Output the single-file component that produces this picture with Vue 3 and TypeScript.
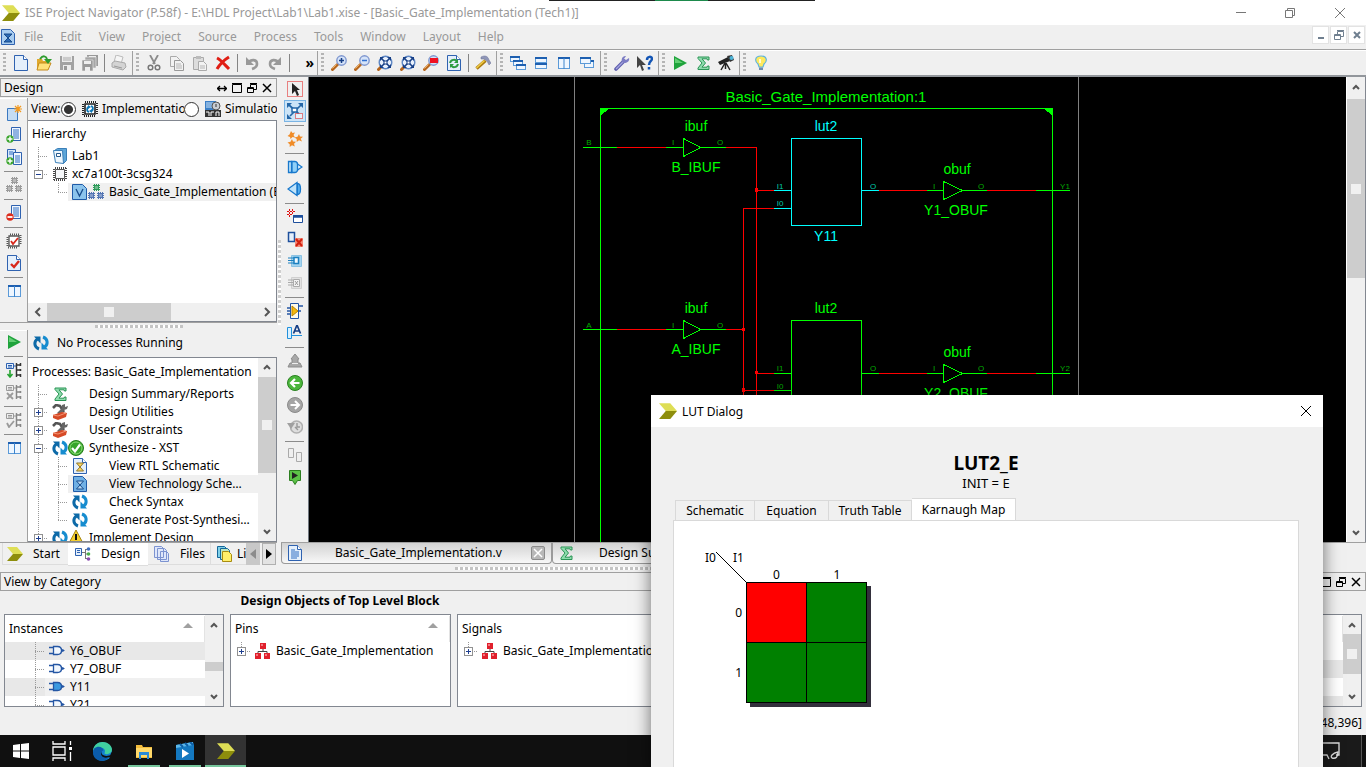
<script setup lang="ts">
import { h, ref, type FunctionalComponent } from 'vue'

const page = '<path d="M1.5 .5h9l4 4v11h-13z" fill="#e4effb" stroke="#2f62b0"/><path d="M10.5 .5v4h4" fill="#fff" stroke="#2f62b0"/>'
const pageLines = page + '<path d="M4 5h4M4 7h8M4 9h8M4 11h8M4 13h6" stroke="#2f6fc4"/>'
const magnifier = '<path d="M1.500 14.500l5-5" stroke="#b5651d" stroke-width="3" stroke-linecap="round"/><path d="M1.500 13.500l4-4" stroke="#f0b060"/><circle cx="10.500" cy="5.500" r="4.700" fill="#d5e3f8" stroke="#7f97cf" stroke-width="1.400"/>'
const fit = '<path d="M1.500 14.500l4-4" stroke="#b5651d" stroke-width="3" stroke-linecap="round"/><circle cx="8.500" cy="7.500" r="6.300" fill="#eaf2fd" stroke="#5d86c4" stroke-width="1.400"/><path d="M4 3l9 9M13 3l-9 9" stroke="#173f86" stroke-width="1.500"/><path d="M3 2h4l-4 4zM14 2h-4l4 4zM3 13h4l-4-4zM14 13h-4l4-4z" fill="#173f86"/><rect x="7" y="6" width="3" height="3" fill="#fff" stroke="#173f86"/>'
const chipRight = '<path d="M10 1h3v14h-3z" fill="#fff"/><path d="M10.500 1v14M10.500 3h4M10.500 8h4M10.500 13h4M14.500 1v3M14.500 7v2M14.500 12v3" fill="none" stroke="#333" stroke-width="1.500"/>'
const win = (x: number, y: number, w: number, ht: number) =>
  `<rect x="${x + 0.5}" y="${y + 0.5}" width="${w - 1}" height="${ht - 1}" fill="#eef6ff" stroke="#5b9ad8"/><path d="M${x} ${y + 1}h${w}" stroke="#1d5fb0" stroke-width="2"/>`
const block = (x: number, y: number, c: string) =>
  `<rect x="${x + 1}" y="${y + 1}" width="5" height="5" fill="${c}"/><path d="M${x} ${y + 1.5}h7M${x} ${y + 3.5}h7M${x} ${y + 5.5}h7M${x + 1.5} ${y}v7M${x + 3.5} ${y}v7M${x + 5.5} ${y}v7" stroke="${c}" stroke-width="1"/><rect x="${x + 2}" y="${y + 2}" width="3" height="3" fill="#fff" fill-opacity=".3"/>`
const gate = (f: string) =>
  `<path d="M0 4.500h5M0 10.500h5M11 7.500h4" stroke="#2456a4" stroke-width="1.600"/><path d="M4.500 3.500h4c3 0 4 2 4 4s-1 4-4 4h-4z" fill="${f}" stroke="#2456a4" stroke-width="1.300"/><path d="M12 5.500l4 2-4 2z" fill="#2456a4"/>`

const icons: Record<string, string> = {
  logo: '<path d="M0 1h10l6 7H6z" fill="#dede55"/><path d="M6 8h10l-6 7H0z" fill="#8e8e0c"/>',
  schem: '<path d="M1.500 .5h9l4 4v11h-13z" fill="#a9cdf0" stroke="#2f62b0"/><path d="M4 5h8l-4 4zM4 13h8l-4-4z" fill="#2d6bb5" stroke="#174b8c"/>',
  schemY: page + '<path d="M4.500 5h7l-3.500 4zM4.500 13h7l-3.500-4z" fill="#ffd85c" stroke="#8b7430"/>',
  schemS: '<path d="M1.500 .5h9l4 4v11h-13z" fill="#70b0e4" stroke="#1f5ba8"/><path d="M4.500 5h7l-3.500 4zM4.500 13h7l-3.500-4z" fill="#b9daf4" stroke="#174b8c"/>',
  page, pageLines,
  open: '<path d="M1 4h5l1 2h6v8H1z" fill="#e0a92c"/><path d="M3 8h12l-3 7H1z" fill="#ffe27a" stroke="#c58a1c"/><path d="M4 4c3-4 6-3 7 0" fill="none" stroke="#2e9c2e" stroke-width="2"/><path d="M8 4h8l-4 5z" fill="#2e9c2e"/>',
  save: '<path d="M1 1h14v14H1z" fill="#a2a2a2"/><path d="M3 1h10v6H3zM4 10h8v5H4z" fill="#ececec"/><path d="M4 3h8M4 5h8" stroke="#aaa"/><path d="M5 11h3v4H5z" fill="#999"/>',
  saveall: '<path d="M5 0h11v11H5z" fill="#999"/><path d="M7 1h7v3H7z" fill="#eee"/><path d="M3 2h11v11H3z" fill="#a6a6a6" stroke="#eee" stroke-width=".6"/><path d="M0 5h11v11H0z" fill="#999" stroke="#eee" stroke-width=".6"/><path d="M2 6h7v3H2zM3 12h5v4H3z" fill="#eee"/>',
  print: '<path d="M5 0l7 2-2 7-7-2z" fill="#f6f6f6" stroke="#bbb"/><path d="M1 8l3-2 10 2 1 4-3 3-11-3z" fill="#d4d4d4" stroke="#aaa"/><path d="M3 11l8 2" stroke="#999"/>',
  cut: '<path d="M4 0l5 9M12 0L7 9" stroke="#8b8b8b" stroke-width="1.800"/><circle cx="4.500" cy="12.500" r="2.300" fill="none" stroke="#777" stroke-width="1.500"/><circle cx="11.500" cy="12.500" r="2.300" fill="none" stroke="#777" stroke-width="1.500"/>',
  copy: '<path d="M1.500 1.500h6l3 3v7h-9z" fill="#f2f2f2" stroke="#aaa"/><path d="M5.500 5.500h6l3 3v7h-9z" fill="#f2f2f2" stroke="#999"/><path d="M7 9h5M7 11h6M7 13h6" stroke="#b5b5b5"/>',
  paste: '<path d="M1.500 2.500h10v12h-10z" fill="#ddd" stroke="#aaa"/><path d="M4 1h5v3H4z" fill="#bbb"/><path d="M6.500 6.500h5l3 3v6h-8z" fill="#f2f2f2" stroke="#aaa"/><path d="M8 11h5M8 13h5" stroke="#b5b5b5"/>',
  del: '<path d="M2 3c4 2 8 7 12 11M14 2C9 5 5 9 2 14" fill="none" stroke="#e01e14" stroke-width="3"/>',
  undo: '<path d="M4 8c3-4 9-4 9 1 0 3-2 4-5 5" fill="none" stroke="#999" stroke-width="2.600"/><path d="M2 2v8h8z" fill="#999"/>',
  redo: '<path d="M12 8c-3-4-9-4-9 1 0 3 2 4 5 5" fill="none" stroke="#999" stroke-width="2.600"/><path d="M14 2v8H6z" fill="#999"/>',
  zin: magnifier + '<path d="M8 5.500h5M10.500 3v5" stroke="#173f86" stroke-width="1.500"/>',
  zout: magnifier + '<path d="M8 5.500h5" stroke="#2f6fd0" stroke-width="1.500"/>',
  fit,
  zbox: magnifier + '<path d="M7 3h8v5H7z" fill="#f01020"/>',
  refresh: page + '<path d="M4 8c1-4 6-4 7-1M12 9c-1 4-6 4-7 1" fill="none" stroke="#2c9c40" stroke-width="2"/><path d="M12 4v4H8zM4 13V9h4z" fill="#2c9c40"/>',
  hammer: '<path d="M1.500 13.500l9-8" stroke="#a97a10" stroke-width="3.400"/><path d="M1.500 13l8-7.500" stroke="#f1cc45" stroke-width="1.600"/><path d="M6 2c4-2 7-1 8 3l2 3-2 2-2-4-3-2-3 0z" fill="#8f96b8" stroke="#6a7196" stroke-width=".5"/>',
  cascade: win(0, 1, 10, 6) + win(3, 5, 10, 6) + win(6, 9, 10, 6),
  tileh: win(2, 2, 12, 6) + win(2, 8, 12, 6),
  tilev: win(2, 2, 12, 12) + '<path d="M8 3v11" stroke="#3d84cc"/>',
  float: win(5, 5, 10, 8) + win(1, 2, 11, 7),
  wrench: '<path d="M2 14l8-8" stroke="#5f5fae" stroke-width="3.600" stroke-linecap="round"/><path d="M2 14l8-8" stroke="#a4a4e0" stroke-width="1.200"/><path d="M12 1c-3 0-5 2-4 6l2 1c3 0 6-2 5-5l-3 2-2-1z" fill="#7c7cc4"/>',
  whatsthis: '<path d="M0 1v12l3-3 2 6 2-1-2-5h4z" fill="#444"/><path d="M10 5c0-4 5-4 5-1 0 2-3 2-3 6M12 12v2.500" fill="none" stroke="#1355b5" stroke-width="2.500"/>',
  play: '<path d="M2 1l13 7-13 7z" fill="#1fa33c"/><path d="M3 3l8 5-8 0z" fill="#63cf74"/>',
  sigma: '<path d="M3 2h11v3h-1.500l-.5-1.200H7L10.500 8 7 12.200h5l.5-1.200H14v3.500H3v-1.500L7 8 3 3.500z" fill="#8fdcae" stroke="#2a9455" stroke-width="1"/>',
  scope: '<path d="M0 7l10-5 2 4-10 4z" fill="#222"/><path d="M9 1l5-1 2 5-4 2z" fill="#333"/><circle cx="13.500" cy="3" r="2" fill="#4db4d8"/><path d="M7 8L3 15M8 8l4 7M7.500 8v6" stroke="#222" stroke-width="1.500"/>',
  bulb: '<path d="M8 1c-7 0-6 6-3 8l1 3h4l1-3c3-2 4-8-3-8z" fill="#ffe95c" stroke="#5fb3de" stroke-width="1.200"/><path d="M6 12.500h4v2.500H6z" fill="#6b8cae"/><path d="M7 4v4" stroke="#fff" stroke-width="1.500"/>',
  newsrc: '<path d="M1.500 3.500h10v12h-10z" fill="#c4dcf4" stroke="#3a78c0"/><path d="M12 0v8M8 4h8M9 1l6 6M15 1L9 7" stroke="#f39a1f" stroke-width="1.200"/>',
  add: '<path d="M5.500 .5h9v13h-9z" fill="#f1f7fe" stroke="#2f62b0"/><path d="M7 3h6M7 5h6M7 7h6M7 9h6M8 11h5" stroke="#2f6fc4"/><circle cx="4" cy="12" r="3.700" fill="#3aa52c"/><path d="M1.500 12h5M4 9.500v5" stroke="#fff" stroke-width="1.500"/>',
  addcopy: '<path d="M1.500 .5h8v13h-8z" fill="#d7e8fa" stroke="#2f62b0"/><path d="M7.500 3.500h8v12h-8z" fill="#f1f7fe" stroke="#2f62b0"/><path d="M3 3h4M3 5h4M9 7h5M9 9h5M9 11h5M9 13h5" stroke="#2f6fc4"/><circle cx="4" cy="12" r="3.700" fill="#3aa52c"/><path d="M1.500 12h5M4 9.500v5" stroke="#fff" stroke-width="1.500"/>',
  blocks: block(5, 0, '#9a9a9a') + block(0, 8, '#9a9a9a') + block(9, 8, '#9a9a9a'),
  hier: block(5, 0, '#2e9b5a') + block(0, 8, '#5375b4') + block(9, 8, '#5375b4'),
  remove: '<path d="M5.500 .5h9v13h-9z" fill="#f1f7fe" stroke="#2f62b0"/><path d="M7 3h6M7 5h6M7 7h6M7 9h6M8 11h5" stroke="#2f6fc4"/><circle cx="4" cy="12" r="3.700" fill="#dc2c1c"/><path d="M1.500 12h5" stroke="#fff" stroke-width="1.800"/>',
  chipcheck: '<path d="M3 3h10v10H3z" fill="#fff" stroke="#555" stroke-width="1.300"/><path d="M4 1.500h10M2 14.500h10M1.500 4v10M14.500 2v10" stroke="#555" stroke-width="2" stroke-dasharray="1 1"/><path d="M5 8l2 3 5-6" fill="none" stroke="#d8281c" stroke-width="1.800"/>',
  chip: '<path d="M3.500 3.500h9v9h-9z" fill="#f6f8fa" stroke="#555"/><path d="M3 2h11M2 14h11M2 3v11M14 2v11" stroke="#444" stroke-width="2" stroke-dasharray="1 1"/>',
  pagecheck: page + '<path d="M5 9l3 3 5-6" fill="none" stroke="#d8281c" stroke-width="2.400"/>',
  panel: win(2, 2, 13, 12) + '<path d="M8.500 3v11" stroke="#3d84cc"/>',
  folder: '<path d="M2.500 2.500l3-2h9v12l-3 3z" fill="#5ea6d8" stroke="#3b7fb8"/><path d="M1.500 2.500h9l1 13-8-1z" fill="#eef7fd" stroke="#3b7fb8"/><path d="M4.500 5.500h4v3h-4z" fill="#fff" stroke="#27598c"/>',
  vfile: '<path d="M.5 .5h10l4 4v11H.5z" fill="#8cc4ec" stroke="#1f5ba8"/><path d="M4 5l3.500 7L11 5" fill="none" stroke="#174b8c" stroke-width="1.300"/>',
  impl: '<path d="M3 3h10v10H3z" fill="#fff" stroke="#222" stroke-width="1.600"/><path d="M3 1h11M2 15h11M1 3v11M15 2v11" stroke="#222" stroke-width="2" stroke-dasharray="1 1"/><path d="M7 11C4 10 5 6 7 6M9 5c3 1 2 5 0 5" fill="none" stroke="#0d78b8" stroke-width="1.800"/><path d="M6 4l3 2-3 2zM10 12l-3-2 3-2z" fill="#0d78b8"/>',
  sim: '<path d="M0 0h11v9H0z" fill="#3b7fc6"/><path d="M1 2h8M1 4h7M1 6h8" stroke="#cfe5f8"/><circle cx="11" cy="5" r="4" fill="#c9cdd2" stroke="#555"/><path d="M11 3v3" stroke="#333"/><path d="M0 9h16v7H0z" fill="#333"/><path d="M1 11h3v4M6 15v-4h3M11 15v-4h3v4" fill="none" stroke="#fff"/>',
  cycle: '<path d="M6 14C.5 12 1 6 4.500 4" fill="none" stroke="#0d6aa8" stroke-width="3"/><path d="M1 1.500h6.500v7z" fill="#0d6aa8"/><path d="M10 2c5.500 2 5 8 1.500 10" fill="none" stroke="#168ccf" stroke-width="3"/><path d="M15 14.500H8.500v-7z" fill="#168ccf"/>',
  ok: '<circle cx="8" cy="8" r="7.500" fill="#38a52c" stroke="#277d1e"/><circle cx="8" cy="8" r="6" fill="none" stroke="#8bdc74"/><path d="M4 8l3 3.500 5-7" fill="none" stroke="#fff" stroke-width="2.200"/>',
  warn: '<path d="M8 0l8 15H0z" fill="#f5cf2e" stroke="#a58410"/><path d="M8 4v6M8 11.500v2" stroke="#111" stroke-width="2"/>',
  tools: '<path d="M1 4l3-3 4 1 4 6" fill="none" stroke="#555" stroke-width="2.600"/><path d="M5 9l5-5V1l3-1v3l3-1-1 3-3 1-4 5z" fill="#666"/><path d="M1 11l9-3 5 1-1 4-8 3-5-2z" fill="#d64a26"/><path d="M1 11l5 1 8-3" fill="none" stroke="#f49372"/>',
  runchip: '<path d="M.5 1.500h7v5h-7z" fill="#e5f0fc" stroke="#2f62b0"/><path d="M2 3.500h4M2 5h4M8 4h3" stroke="#2f62b0"/><path d="M4 8v7M1.500 12l2.500 3 2.500-3" fill="none" stroke="#26a332" stroke-width="1.600"/>' + chipRight,
  stopchip: '<g opacity=".55"><path d="M.5 1.500h7v5h-7z" fill="#eee" stroke="#555"/><path d="M2 3.500h4M2 5h4M8 4h3" stroke="#555"/><path d="M1 9l6 6M7 9l-6 6" stroke="#555" stroke-width="1.800"/>' + chipRight + '</g>',
  okchip: '<g opacity=".55"><path d="M.5 1.500h7v5h-7z" fill="#eee" stroke="#555"/><path d="M2 3.500h4M2 5h4M8 4h3" stroke="#555"/><path d="M1 11l2 4 5-6" fill="none" stroke="#555" stroke-width="1.800"/>' + chipRight + '</g>',
  select: '<path d="M.5 .5h15v15H.5z" fill="none" stroke="#e01010" stroke-dasharray="1 1"/><path d="M5 2v11l3-3 2 5 2-1-2-5h3z" fill="#222"/>',
  zoomsel: '<path d="M2 2l10 9M14 2L3 13" stroke="#2567a8" stroke-width="1.700"/><path d="M0 0h5L0 5zM16 0h-5l5 5zM0 16h5l-5-5z" fill="#2567a8"/><rect x="5" y="5" width="5" height="4" fill="#fff" stroke="#2567a8" stroke-width="1.500"/><path d="M8.500 10.500h7v5h-7z" fill="#e5f1fb" stroke="#e01010" stroke-dasharray="1 1"/>',
  stars: '<path d="M4 0l1.500 2 2.500-.5-1.500 2.500 1.500 2.500-2.500-.4L3.500 8 3 6 .5 5l2-1.500zM12 3l1 2.500 3 .2-2.300 2 1.300 2.800-3-1.200-2.300 1.700V8L7.500 6.500l3-.8zM5 8l1 2.500 3 .2-2 2 .8 2.800-2.800-1.200L2.700 16v-2.800L.5 11.500l3-.8z" fill="#f08c28"/>',
  bufR: '<path d="M1.500 2.500h3v11h-3z" fill="#bfe3fa" stroke="#1878cc" stroke-width="1.300"/><path d="M5 2.500h3c2 0 3 1.500 3 5.500s-1 5.500-3 5.500H5z" fill="#8fd0f8" stroke="#1878cc" stroke-width="1.300"/><path d="M10.500 5l4.500 3-4.500 3z" fill="#e4f4fe" stroke="#1878cc" stroke-width="1.300"/>',
  bufL: '<path d="M10 1.500L1 8l9 6.500z" fill="#bfe3fa" stroke="#1878cc" stroke-width="1.300"/><path d="M10.500 2.500c4 0 4 11 0 11z" fill="#5cb4f0" stroke="#1878cc" stroke-width="1.300"/>',
  newsch: '<path d="M6.500 6.500h9v7h-9z" fill="#fff" stroke="#1e4f9c"/><path d="M6 7.500h10" stroke="#1e4f9c" stroke-width="2.500"/><path d="M0 2.500h8M0 5.500h6M2.500 0v8M5.500 0v6" stroke="#e01010" stroke-dasharray="2 1"/>',
  delsch: '<path d="M1.500 1.500h6v9h-6z" fill="#e4effb" stroke="#1e4f9c" stroke-width="1.500"/><path d="M8 7h8v9H8z" fill="#f28a78"/><path d="M9 8l6 7M15 8l-6 7" stroke="#d3200f" stroke-width="2"/>',
  push: '<path d="M4.500 2.500h10v11h-10z" fill="#a3d4f0" stroke="#8cc2e2"/><path d="M1 5h6M1 7.500h6M1 10h6" stroke="#1c80c0" stroke-width="1.200"/><path d="M7 4.500h4.500v6H7z" fill="#f2faff" stroke="#1c80c0" stroke-width="1.500"/>',
  pop: '<path d="M4.500 2.500h10v11h-10z" fill="#e2e2e2" stroke="#d0d0d0"/><path d="M1 5h5M1 7.500h5M1 10h5" stroke="#aaa" stroke-width="1.200"/><path d="M6.500 4.500h6v7h-6z" fill="#f4f4f4" stroke="#aaa"/><path d="M8 6l3 4M11 6l-3 4" stroke="#999"/>',
  addsym: '<path d="M0 5h4M0 8h4M0 11h4M11 3h5M11 8h3" stroke="#2456a4" stroke-width="1.400"/><path d="M3.500 .5h8v15h-8z" fill="#fffbe8" stroke="#2456a4"/><path d="M5 3l6 5-6 5z" fill="#f5b90c" stroke="#b98200"/>',
  label: '<path d="M.5 2.500h4v11h-4z" fill="#d9f0ff" stroke="#2090dc"/><path d="M5 10.500h10" stroke="#2090dc"/><path d="M6.500 8.500L10 0l3.500 8.500M8 6h4" fill="none" stroke="#173f86" stroke-width="1.700"/>',
  up: '<path d="M8 1l4 5h-1v4h2l2 4H1l2-4h2V6H4z" fill="#a8a8a8" stroke="#8c8c8c"/><path d="M5 10.500h6" stroke="#eee"/>',
  back: '<circle cx="8" cy="8" r="7.500" fill="#4bb63c" stroke="#298220"/><path d="M12.500 8H4M8 4L4 8l4 4" fill="none" stroke="#fff" stroke-width="2.200"/>',
  fwd: '<circle cx="8" cy="8" r="7.500" fill="#a5a5a5" stroke="#8a8a8a"/><path d="M3.500 8H12M8 4l4 4-4 4" fill="none" stroke="#fff" stroke-width="2"/>',
  history: '<circle cx="9.500" cy="8" r="6" fill="#dedede" stroke="#b0b0b0" stroke-width="1.500"/><path d="M0 4h8l-4 6z" fill="#a0a0a0"/><path d="M10 4v4h3M8 8l3 3" fill="none" stroke="#999" stroke-width="1.400"/>',
  pair: '<path d="M1.500 1.500h5v9h-5zM9.500 5.500h5v9h-5z" fill="#efefef" stroke="#aaa"/>',
  tip: '<path d="M2.500 1.500h11v10h-3l-2.500 4-2.500-4h-3z" fill="#5cc247" stroke="#2c7e20"/><path d="M5 3l6 3.500L5 10z" fill="#222"/>',
  dtree: '<path d="M.5 2.500h6v7h-6z" fill="#e5f0fc" stroke="#2f62b0"/><path d="M2 4.500h3M2 6.500h3" stroke="#2f62b0"/><path d="M7 6.500h3M10.500 3v9M10 3.500h3M10 8h3M10 12.500h3" fill="none" stroke="#777"/><circle cx="13.500" cy="3" r="1.800" fill="#3f6fc0"/><circle cx="13.500" cy="8" r="1.800" fill="#4bb04b"/><circle cx="13.500" cy="13" r="1.800" fill="#8d4fb0"/>',
  files: '<path d="M.5 .5h7l2 2v9h-9zM3.500 2.500h7l2 2v9h-9zM6.500 5.500h6l2 2v8h-8z" fill="#dfe7fa" stroke="#7c93d0"/>',
  libs: '<path d="M.5 .5h7l2 2v9h-9z" fill="#7fd0e8" stroke="#15679a"/><path d="M3.500 2.500h7l2 2v9h-9z" fill="#bfe6c0" stroke="#15679a"/><path d="M5.500 5.500h6l3 3v7h-9z" fill="#fff06a" stroke="#a98c10"/>',
  red: '<path d="M5 0h6v6H5zM0 10h6v6H0zM9 10h6v6H9z" fill="#e0202c"/><path d="M8 6v2M3 10V8.500h9V10" fill="none" stroke="#444"/><path d="M6 1h2v2H6zM1 11h2v2H1zM10 11h2v2h-2z" fill="#f4777e"/>',
  gate: gate('#f1f7fe'), gateOn: gate('#3c9ae0'),
}

const Icon: FunctionalComponent<{ name: string }> = (p) =>
  h('svg', { width: 16, height: 16, viewBox: '0 0 16 16', fill: 'none', 'aria-hidden': 'true', innerHTML: icons[p.name] })
Icon.props = ['name']

/* Small window-frame glyphs, 10 by 10 */
const glyphs: Record<string, string> = {
  move: '<path d="M0 5.500h10M3 3L.5 5.500 3 8M7 3l2.500 2.500L7 8" stroke-width="1.300"/>',
  max: '<path d="M.5 1.500h9v8h-9zM0 .5h10"/>',
  rest: '<path d="M3.500 4V1.500h6v5H7M3 .5h7M.5 4.500h6v5h-6zM0 5.500h7"/>',
  close: '<path d="M1 1l8 8M9 1L1 9" stroke-width="1.500"/>',
  up: '<path d="M2 7l3-3 3 3" stroke-width="2"/>',
  down: '<path d="M2 3l3 3 3-3" stroke-width="2"/>',
  left: '<path d="M7 1L3 5l4 4" stroke-width="2"/>',
  right: '<path d="M3 1l4 4-4 4" stroke-width="2"/>',
}
const Glyph: FunctionalComponent<{ name: string }> = (p) =>
  h('svg', { width: 10, height: 10, viewBox: '0 0 10 10', fill: 'none', stroke: 'currentColor', 'aria-hidden': 'true', innerHTML: glyphs[p.name] })
Glyph.props = ['name']

/* One 20 by 18 cell of a tree's connector lines */
const cellParts: Record<string, string> = {
  none: '',
  line: '<path d="M10.500 0v18" class="d"/>',
  tee: '<path d="M10.500 0v18M10 9.500h9" class="d"/>',
  end: '<path d="M10.500 0v9M10 9.500h9" class="d"/>',
  plus: '<path d="M10.500 0v18M10 9.500h9" class="d"/><path d="M6.500 5.500h8v8h-8z" fill="#fff" stroke="#919191"/><path d="M8 9.500h5M10.500 7v5" stroke="#1f3f8f"/>',
  plusend: '<path d="M10.500 0v9M10 9.500h9" class="d"/><path d="M6.500 5.500h8v8h-8z" fill="#fff" stroke="#919191"/><path d="M8 9.500h5M10.500 7v5" stroke="#1f3f8f"/>',
  minus: '<path d="M10.500 0v18M10 9.500h9" class="d"/><path d="M6.500 5.500h8v8h-8z" fill="#fff" stroke="#919191"/><path d="M8 9.500h5" stroke="#1f3f8f"/>',
  minusend: '<path d="M10.500 0v9M10 9.500h9" class="d"/><path d="M6.500 5.500h8v8h-8z" fill="#fff" stroke="#919191"/><path d="M8 9.500h5" stroke="#1f3f8f"/>',
}
const Cell: FunctionalComponent<{ kind: string }> = (p) =>
  h('svg', { class: 'cell', width: 20, height: 18, viewBox: '0 0 20 18', fill: 'none', 'aria-hidden': 'true', innerHTML: cellParts[p.kind] })
Cell.props = ['kind']

interface Row { cells: string[]; icons: string[]; text: string; on?: boolean; alt?: boolean }

const menus = ['File', 'Edit', 'View', 'Project', 'Source', 'Process', 'Tools', 'Window', 'Layout', 'Help']
const toolbars: string[][] = [
  ['page', 'open', 'save', 'saveall', '|', 'print'],
  ['cut', 'copy', 'paste', 'del', '|', 'undo', 'redo', '|', '»'],
  ['zin', 'zout', 'fit', 'fit', 'zbox', 'refresh', '|', 'hammer'],
  ['cascade', 'tileh', 'tilev', 'float'],
  ['wrench', 'whatsthis'],
  ['play', 'sigma', 'scope'],
  ['bulb'],
]
const stripA = ['newsrc', 'add', 'addcopy', '|', 'blocks', '|', 'remove', '|', 'chipcheck', 'pagecheck', '|', 'panel']
const stripB = ['play', '|', 'runchip', 'stopchip', '|', 'okchip', '|', 'panel']
const stripC = ['select', 'zoomsel', '|', 'stars', '|', 'bufR', 'bufL', '|', 'newsch', 'delsch', 'push', 'pop', '|', 'addsym', 'label', '|', 'up', 'back', 'fwd', 'history', '|', 'pair', 'tip']

const hierarchy: Row[] = [
  { cells: ['tee'], icons: ['folder'], text: 'Lab1' },
  { cells: ['minusend'], icons: ['chip'], text: 'xc7a100t-3csg324' },
  { cells: ['none', 'end'], icons: ['vfile', 'hier'], text: 'Basic_Gate_Implementation (Basic_Gate_Implementation.v)', on: true },
]
const processes: Row[] = [
  { cells: ['tee'], icons: ['sigma'], text: 'Design Summary/Reports' },
  { cells: ['plus'], icons: ['tools'], text: 'Design Utilities' },
  { cells: ['plus'], icons: ['tools'], text: 'User Constraints' },
  { cells: ['minus'], icons: ['cycle', 'ok'], text: 'Synthesize - XST' },
  { cells: ['line', 'tee'], icons: ['schemY'], text: 'View RTL Schematic' },
  { cells: ['line', 'tee'], icons: ['schemS'], text: 'View Technology Schematic', on: true },
  { cells: ['line', 'tee'], icons: ['cycle'], text: 'Check Syntax' },
  { cells: ['line', 'end'], icons: ['cycle'], text: 'Generate Post-Synthesis Simulation' },
  { cells: ['plus'], icons: ['cycle', 'warn'], text: 'Implement Design' },
]
const instances: Row[] = [
  { cells: ['none', 'tee'], icons: ['gate'], text: 'Y6_OBUF', alt: true },
  { cells: ['none', 'tee'], icons: ['gate'], text: 'Y7_OBUF' },
  { cells: ['none', 'tee'], icons: ['gateOn'], text: 'Y11', on: true, alt: true },
  { cells: ['none', 'tee'], icons: ['gate'], text: 'Y21' },
]
const view = ref('impl')
const lutTabs = ['Schematic', 'Equation', 'Truth Table', 'Karnaugh Map']
const kmap = [[0, 1], [1, 1]]
</script>

<template>
  <div class="app">
    <header class="title">
      <svg class="logo" width="18" height="18" viewBox="0 0 16 16" aria-hidden="true" v-html="icons.logo"></svg>
      <span class="grow">ISE Project Navigator (P.58f) - E:\HDL Project\Lab1\Lab1.xise - [Basic_Gate_Implementation (Tech1)]</span>
      <button class="winbtn" aria-label="Minimize"><svg width="10" height="10" stroke="#777" fill="none"><path d="M0 4.500h10" /></svg></button>
      <button class="winbtn" aria-label="Restore"><svg width="10" height="10" stroke="#777" fill="none"><path d="M.5 2.500h7v7h-7zM2.500 2.500v-2h7v7h-2" /></svg></button>
      <button class="winbtn" aria-label="Close"><svg width="10" height="10" stroke="#777" fill="none"><path d="M0 0l10 10M10 0L0 10" /></svg></button>
    </header>
    <div class="notch"><i></i></div>

    <nav class="menu">
      <Icon name="schem" />
      <div class="items"><button v-for="m in menus" :key="m">{{ m }}</button></div>
      <div class="mdi">
        <button aria-label="Minimize document"><svg width="10" height="10" stroke="#6f7f8f" stroke-width="2"><path d="M2 8h6" /></svg></button>
        <button aria-label="Restore document"><Glyph name="rest" /></button>
        <button aria-label="Close document"><svg width="10" height="10" stroke="#6f7f8f" stroke-width="2"><path d="M2 2l6 6M8 2L2 8" /></svg></button>
      </div>
    </nav>

    <div class="toolbar">
      <div v-for="(g, i) in toolbars" :key="i" class="group">
        <span class="grip"></span>
        <template v-for="(t, j) in g" :key="j">
          <span v-if="t === '|'" class="vsep"></span>
          <button v-else-if="t === '»'" class="more">»</button>
          <button v-else :aria-label="t"><Icon :name="t" /></button>
        </template>
      </div>
    </div>

    <main class="work">
      <section class="dock">
        <div class="docktitle">
          <span class="grow">Design</span>
          <button aria-label="Move"><Glyph name="move" /></button>
          <button aria-label="Maximize"><Glyph name="max" /></button>
          <button aria-label="Float"><Glyph name="rest" /></button>
          <button aria-label="Close"><Glyph name="close" /></button>
        </div>
        <div class="pane top">
          <div class="strip">
            <template v-for="(t, i) in stripA" :key="i">
              <hr v-if="t === '|'"><button v-else :aria-label="t"><Icon :name="t" /></button>
            </template>
          </div>
          <div class="col">
            <div class="views">
              <span class="vl">View:</span>
              <label class="im"><input v-model="view" type="radio" value="impl"><Icon name="impl" /><span>Implementation</span></label>
              <label class="si"><input v-model="view" type="radio" value="sim"><Icon name="sim" /><span>Simulation</span></label>
            </div>
            <div class="tree">
              <div class="head">Hierarchy</div>
              <div class="rows">
                <div v-for="r in hierarchy" :key="r.text" class="row">
                  <Cell v-for="(c, k) in r.cells" :key="k" :kind="c" />
                  <div class="body" :class="{ on: r.on }">
                    <span class="slot" :class="{ wide: r.icons.length > 1 }"><Icon v-for="n in r.icons" :key="n" :name="n" /></span>
                    <span class="txt">{{ r.text }}</span>
                  </div>
                </div>
              </div>
              <div class="hbar">
                <button aria-label="Scroll left"><Glyph name="left" /></button>
                <div class="track"><span class="thumb"><i></i></span></div>
                <button aria-label="Scroll right"><Glyph name="right" /></button>
              </div>
            </div>
          </div>
        </div>
        <div class="hsplit"><span></span></div>
        <div class="pane low">
          <div class="strip">
            <template v-for="(t, i) in stripB" :key="i">
              <hr v-if="t === '|'"><button v-else :aria-label="t"><Icon :name="t" /></button>
            </template>
          </div>
          <div class="col">
            <div class="running"><Icon name="cycle" />No Processes Running</div>
            <div class="tree across">
              <div class="grow clip lower">
                <div class="head">Processes: Basic_Gate_Implementation</div>
                <div v-for="r in processes" :key="r.text" class="row">
                  <Cell v-for="(c, k) in r.cells" :key="k" :kind="c" />
                  <div class="body" :class="{ on: r.on }">
                    <span class="slot wide"><Icon v-for="n in r.icons" :key="n" :name="n" /></span>
                    <span class="txt dots">{{ r.text }}</span>
                  </div>
                </div>
              </div>
              <div class="vbar">
                <button aria-label="Scroll up"><Glyph name="up" /></button>
                <div class="track"><span class="thumb mid"><i></i></span></div>
                <button aria-label="Scroll down"><Glyph name="down" /></button>
              </div>
            </div>
          </div>
        </div>
        <div class="docktabs">
          <button class="t1"><Icon name="logo" />Start</button>
          <button class="t2 cur"><Icon name="dtree" />Design</button>
          <button class="t3"><Icon name="files" />Files</button>
          <button class="t4"><Icon name="libs" />Libraries</button>
          <button class="arrow off" aria-label="Previous tabs"><svg width="6" height="10"><path d="M6 0v10L0 5z" fill="#8c8c8c" /></svg></button>
          <button class="arrow" aria-label="More tabs"><svg width="6" height="10"><path d="M0 0v10l6-5z" fill="#000" /></svg></button>
        </div>
      </section>

      <div class="vsplit"></div>

      <section class="editor">
        <div class="canvas">
          <div class="strip tall">
            <template v-for="(t, i) in stripC" :key="i">
              <hr v-if="t === '|'"><button v-else :aria-label="t" :class="{ pressed: t === 'zoomsel' }"><Icon :name="t" /></button>
            </template>
          </div>
          <div class="sheet">
            <svg class="draw" width="100%" height="100%" fill="none" shape-rendering="crispEdges">
              <g transform="translate(-309 -77)">
                <path d="M574.500 77v900M1078.500 77v900" stroke="#808080" />
                <g stroke="#f00">
                  <path d="M617 147.500h49M726 147.500h30.500V900M756 190.500h18M743.500 900V208.500H774M617 329.500h49M726 329.500h18M756 373.500h18M743 390.500h31M879 190.500h48M987 190.500h49M878 373.500h49M987 373.500h49" />
                </g>
                <path d="M755 188h3v4h-3zM742 328h3v3h-3zM755 371h3v3h-3zM742 388h3v4h-3z" fill="#f00" />
                <g stroke="#0f0">
                  <path d="M600.500 900V108.500h452V900M583 147.500h34M666 147.500h17M700 147.500h26M583 329.500h34M666 329.500h17M700 329.500h26" />
                  <path d="M927 190.500h16M962 190.500h25M1036 190.500h34M927 373.500h16M962 373.500h25M1036 373.500h34M774 373.500h17M774 390.500h17M862 373.500h17" />
                  <path d="M683.500 138.500v18l17-9zM683.500 320.500v18l17-9zM943.500 181.500v18l19-9zM943.500 364.500v18l19-9zM791.500 320.500h70v87h-70z" />
                </g>
                <path d="M600 108h10l-10 8zM1053 108h-10l10 8z" fill="#0f0" />
                <path d="M791.500 138.500h70v87h-70zM774 190.500h17M774 208.500h17M862 190.500h17" stroke="#0ff" />
                <g class="lab" fill="#0f0">
                  <text x="826" y="102" class="big">Basic_Gate_Implementation:1</text>
                  <text x="696" y="131">ibuf</text><text x="696" y="172">B_IBUF</text>
                  <text x="696" y="313">ibuf</text><text x="696" y="354">A_IBUF</text>
                  <text x="957" y="174">obuf</text><text x="956" y="215">Y1_OBUF</text>
                  <text x="957" y="357">obuf</text><text x="956" y="398">Y2_OBUF</text>
                  <text x="826" y="313">lut2</text>
                  <g fill="#0ff"><text x="826" y="131">lut2</text><text x="826" y="241">Y11</text></g>
                </g>
                <g class="pin" fill="#00a800">
                  <text x="589" y="145">B</text><text x="673" y="145">I</text><text x="720" y="145">O</text>
                  <text x="589" y="328">A</text><text x="673" y="328">I</text><text x="720" y="328">O</text>
                  <text x="934" y="189">I</text><text x="981" y="189">O</text><text x="1065" y="189">Y1</text>
                  <text x="934" y="371">I</text><text x="981" y="371">O</text><text x="1065" y="371">Y2</text>
                  <text x="780" y="371">I1</text><text x="780" y="389">I0</text><text x="873" y="371">O</text>
                  <g fill="#00c8a8"><text x="780" y="189">I1</text><text x="780" y="206">I0</text><text x="873" y="189">O</text></g>
                </g>
              </g>
            </svg>
          </div>
          <div class="vbar edge">
            <button aria-label="Scroll up"><Glyph name="up" /></button>
            <div class="track"><span class="thumb big"><i></i></span></div>
            <button aria-label="Scroll down"><Glyph name="down" /></button>
          </div>
        </div>
        <div class="doctabs">
          <button class="doc"><Icon name="pageLines" /><span>Basic_Gate_Implementation.v</span><b><Glyph name="close" /></b></button>
          <button class="doc"><Icon name="sigma" /><span>Design Summary</span></button>
        </div>
      </section>
    </main>

    <section class="cat">
      <div class="dotline"></div>
      <div class="docktitle">
        <span class="grow">View by Category</span>
        <button aria-label="Maximize"><Glyph name="max" /></button>
        <button aria-label="Float"><Glyph name="rest" /></button>
        <button aria-label="Close"><Glyph name="close" /></button>
      </div>
      <h2>Design Objects of Top Level Block</h2>
      <div class="lists">
        <div class="list">
          <div class="grow clip lower">
            <div class="head">Instances<i class="sort"></i></div>
            <div v-for="r in instances" :key="r.text" class="row" :class="{ alt: r.alt }">
              <Cell v-for="(c, k) in r.cells" :key="k" :kind="c" />
              <div class="body" :class="{ on: r.on }"><span class="slot"><Icon :name="r.icons[0]" /></span><span class="txt">{{ r.text }}</span></div>
            </div>
          </div>
          <div class="vbar">
            <button aria-label="Scroll up"><Glyph name="up" /></button>
            <div class="track"><span class="thumb small"></span></div>
            <button aria-label="Scroll down"><Glyph name="down" /></button>
          </div>
        </div>
        <div v-for="n in ['Pins', 'Signals']" :key="n" class="list">
          <div class="grow clip lower">
            <div class="head">{{ n }}<i class="sort"></i></div>
            <div class="row"><Cell kind="plusend" /><div class="body"><span class="slot"><Icon name="red" /></span><span class="txt">Basic_Gate_Implementation</span></div></div>
          </div>
        </div>
        <div class="list props">
          <div class="grow clip lower"><div class="head"></div><div class="row"></div><div class="row alt"></div><div class="row"></div><div class="row alt"></div></div>
          <div class="vbar">
            <button aria-label="Scroll up"><Glyph name="up" /></button>
            <div class="track"><span class="thumb prop"><i></i></span></div>
            <button aria-label="Scroll down"><Glyph name="down" /></button>
          </div>
        </div>
      </div>
      <div class="status">[748,396]</div>
    </section>

    <footer class="taskbar">
      <button aria-label="Start menu"><svg width="16" height="16" fill="#fff"><path d="M0 2l7-1v6.500H0zM8 1l8-1v7.500H8zM0 8.500h7V15l-7-1zM8 8.500h8V16l-8-1z" /></svg></button>
      <button aria-label="Task view"><svg width="20" height="20" fill="none" stroke="#fff" stroke-width="1.300"><path d="M1 0v3h12V0M1 20v-3h12v3M1 6h12v8H1zM18.500 0v4M18.500 11v9" /><path d="M17 6h3v3h-3z" fill="#fff" stroke="none" /></svg></button>
      <button aria-label="Edge"><svg width="19" height="19" viewBox="0 0 20 20"><circle cx="10" cy="10" r="10" fill="#1480cf" /><path d="M0 9C1 3 5 0 10 0c7 0 10 5 10 8 0 4-5 6-8 4 2-4-1-6-4-6C4 6 1 8 0 9z" fill="#40d0a0" /><path d="M1 7c5-4 10-1 10 2-3 0-4 8 5 8-6 6-16 2-16-6z" fill="#0b5cab" /><path d="M9 10c-1 3 2 6 9 4l2-4 1 6-4 0c-7 2-10-3-8-6z" fill="#101010" /></svg></button>
      <button class="run" aria-label="Explorer"><svg width="16" height="16"><path d="M0 2h6l1 2h9v11H0z" fill="#f3bd3c" /><path d="M0 5h16v9H0z" fill="#ffd96a" /><path d="M3 9h10v7h-2v-4H5v4H3z" fill="#2a8ad6" /></svg></button>
      <button class="run" aria-label="Movies"><svg width="18" height="18"><path d="M0 3l17-3 1 3v15H0z" fill="#1478c0" /><path d="M0 3l17-3v3L0 6z" fill="#5cb8ea" /><path d="M4 2l3 3M9 1l3 3M14 0l3 3" stroke="#0e5ea6" stroke-width="2" /><path d="M6 7l7 4.500L6 16z" fill="#fff" /></svg></button>
      <button class="run here" aria-label="ISE"><svg width="18" height="18" viewBox="0 0 16 16" v-html="icons.logo"></svg></button>
      <span class="grow"></span>
      <button class="note" aria-label="Notifications"><svg width="18" height="18" fill="none" stroke="#ddd" stroke-width="1.300"><path d="M0 1h17v12h-3M0 13h5l2 4" /><path d="M10 16c-2-1 0-5 6-6 0 5-2 7-6 6z" /></svg></button>
    </footer>

    <div class="dialog" role="dialog" aria-label="LUT Dialog">
      <div class="dtitle">
        <svg class="logo" width="18" height="18" viewBox="0 0 16 16" aria-hidden="true" v-html="icons.logo"></svg>
        <span class="grow">LUT Dialog</span>
        <button aria-label="Close dialog"><svg width="10" height="10" stroke="#000" fill="none"><path d="M0 0l10 10M10 0L0 10" /></svg></button>
      </div>
      <div class="dbody">
        <h1>LUT2_E</h1>
        <p>INIT = E</p>
        <div class="dtabs" role="tablist">
          <button v-for="t in lutTabs" :key="t" role="tab" :class="{ cur: t === 'Karnaugh Map' }">{{ t }}</button>
        </div>
        <div class="dpane">
          <table>
            <thead>
              <tr>
                <th class="corner"><span>I0</span><svg width="30" height="30"><path d="M0 0l30 30" stroke="#000" /></svg><span class="i1">I1</span></th>
                <th>0</th><th>1</th>
              </tr>
            </thead>
            <tbody>
              <tr v-for="(line, i) in kmap" :key="i">
                <th>{{ i }}</th>
                <td v-for="(v, j) in line" :key="j" :class="v ? 'one' : 'zero'"></td>
              </tr>
            </tbody>
          </table>
        </div>
      </div>
    </div>
  </div>
</template>

<style>
html, body { background: #f0f0f0; overflow: hidden; }
</style>

<style scoped>
* { box-sizing: border-box; }
.app { position: relative; display: flex; flex-direction: column; height: 100vh; overflow: hidden; background: #f0f0f0; color: #000; font: 12px/18px "Noto Sans", sans-serif; }
button { margin: 0; padding: 0; border: 0; background: none; color: inherit; font: inherit; display: flex; align-items: center; justify-content: center; flex: none; }
svg { display: block; flex: none; }
.grow { flex: 1; min-width: 0; }
.clip { overflow: hidden; }

.title { display: flex; align-items: center; height: 25px; flex: none; background: #fff; color: #999; padding-left: 2px; white-space: nowrap; }
.title .logo { margin-right: 5px; }
.winbtn { width: 49px; height: 24px; }
.winbtn:last-child { width: 52px; }
.notch { position: absolute; left: 549px; top: 0; width: 266px; height: 1px; background: #222; }
.notch i { display: block; width: 53px; height: 1px; margin-left: 106px; background: #1d8a4c; }

.menu { display: flex; align-items: center; height: 25px; flex: none; border-bottom: 1px solid #a0a0a0; color: #999; }
.items { display: flex; flex: 1; gap: 17px; margin-left: 8px; }
.mdi { display: flex; gap: 1px; padding-right: 1px; align-self: flex-start; color: #6f7f8f; }
.mdi button { width: 17px; height: 18px; border: 1px solid #e3e3e3; background: #fff; margin-top: 1px; }

.toolbar { display: flex; height: 27px; flex: none; border-top: 1px solid #fff; border-bottom: 2px solid #92969b; }
.group { display: flex; align-items: center; padding: 0 2px 0 3px; border-right: 1px solid #a0a0a0; }
.group:last-child { border-right: 0; }
.group button { width: 23px; height: 22px; }
.grip { width: 3px; height: 20px; margin-right: 3px; background: repeating-linear-gradient(#b4b4b4 0 2px, transparent 2px 4px); }
.vsep { width: 6px; height: 18px; display: flex; justify-content: center; }
.vsep::before { content: ""; width: 1px; background: #858585; }
.group .more { width: 23px; padding-right: 1px; justify-content: flex-end; font: bold 14px/18px "Noto Sans", sans-serif; }

.work { display: flex; flex: 1; min-height: 0; }
.dock { width: 277px; display: flex; flex-direction: column; flex: none; min-height: 0; }
.docktitle { display: flex; align-items: center; height: 19px; margin-top: 1px; flex: none; border: 1px solid #a0a0a0; padding: 0 2px 0 3px; }
.docktitle button { width: 15px; height: 16px; }
.pane { display: flex; min-height: 0; }
.pane.top { flex: 225 1 0; border-bottom: 1px solid #a0a0a0; margin-top: 1px; }
.pane.low { flex: 213 1 0; }
.strip { width: 27px; flex: none; display: flex; flex-direction: column; align-items: center; padding-top: 3px; border-top: 1px solid #fff; }
.strip button { width: 22px; height: 22px; }
.strip hr { width: 19px; height: 1px; margin: 3px 0 2px; border: 0; flex: none; background: #8c8c8c; }
.pane.low .strip { padding-top: 0; }
.strip.tall { padding-top: 1px; border: 0; }
.pressed { background: #cce4f7; box-shadow: inset 0 0 0 1px #7ab4e4; }
.col { flex: 1; min-width: 0; display: flex; flex-direction: column; border-left: 1px solid #a0a0a0; }
.views { display: flex; align-items: center; height: 22px; flex: none; padding-left: 3px; white-space: nowrap; }
.vl { width: 30px; }
.views label { display: flex; align-items: center; overflow: hidden; gap: 4px; }
.views label svg { margin-left: 2px; }
.im { width: 123px; }
.si { flex: 1; }
.views input { appearance: none; width: 15px; height: 15px; margin: 0; border: 1px solid #333; border-radius: 50%; background: #fff; flex: none; }
.views input:checked { background: radial-gradient(circle, #333 0 4px, #fff 5px); }
.tree { position: relative; flex: 1; min-height: 0; display: flex; flex-direction: column; background: #fff; border: 1px solid #828790; border-left: 0; overflow: hidden; }
.tree.across { flex-direction: row; }
.lower { padding-top: 1px; }
.head { height: 26px; padding-left: 4px; line-height: 26px; white-space: nowrap; }
.rows { flex: 1; }
.row { display: flex; height: 18px; white-space: nowrap; }
.cell :deep(.d) { stroke: #999; stroke-dasharray: 1 1; }
.cell :deep(path) { shape-rendering: crispEdges; }
.body { display: flex; flex: 1; min-width: 0; align-items: center; padding-left: 4px; overflow: hidden; }
.body.on { background: #f0f0f0; }
.slot { display: flex; width: 20px; flex: none; }
.slot.wide { width: 37px; }
.list .slot { width: 21px; }
.txt { min-width: 0; line-height: 18px; }
.dots { overflow: hidden; text-overflow: ellipsis; padding-right: 5px; }
.hbar { display: flex; height: 18px; flex: none; background: #f0f0f0; color: #555; }
.hbar button { width: 19px; }
.hbar .track { flex: 1; display: flex; }
.thumb { display: flex; align-items: center; justify-content: center; background: #cdcdcd; width: 59%; }
.thumb i { width: 10px; height: 10px; background: #f0f0f0; }
.vbar { width: 18px; flex: none; display: flex; flex-direction: column; background: #f0f0f0; color: #555; }
.vbar button { height: 19px; width: 100%; }
.vbar .track { flex: 1; min-height: 0; display: flex; flex-direction: column; }
.vbar .thumb { width: 100%; }
.thumb.mid { height: 66%; }
.thumb.big { height: 42%; margin-top: 3px; }
.thumb.small { height: 9px; margin-top: 28px; }
.thumb.prop { height: 75%; }
.hsplit { height: 7px; flex: none; display: flex; align-items: center; justify-content: center; }
.hsplit span { width: 88px; height: 3px; background: repeating-linear-gradient(90deg, #c4c4c4 0 3px, #fff 3px 5px); }
.running { display: flex; align-items: center; height: 27px; flex: none; gap: 8px; padding-left: 5px; }
.docktabs { display: flex; height: 24px; flex: none; padding-left: 2px; border-top: 1px solid #a0a0a0; overflow: hidden; }
.docktabs button { height: 22px; justify-content: flex-start; border-bottom: 1px solid #ddd; }
.t1 { width: 66px; padding-left: 4px; gap: 10px; border-left: 1px solid #ddd; }
.docktabs .cur { width: 80px; height: 23px; padding-left: 7px; gap: 10px; background: #fff; }
.t3 { width: 63px; padding-left: 6px; gap: 10px; border-right: 1px solid #ddd; }
.t4 { width: 35px; padding-left: 6px; gap: 4px; overflow: hidden; }
.docktabs .arrow { width: 14px; justify-content: center; border: 1px solid #b0b0b0; background: #e3e3e3; }
.docktabs .off { background: #c8c8c8; border-color: #c8c8c8; margin-right: 2px; }
.vsplit { width: 4px; flex: none; background: repeating-linear-gradient(#cfcfcf 0 3px, #fff 3px 5px) 1px 163px / 3px 85px no-repeat; }

.editor { flex: 1; min-width: 0; display: flex; flex-direction: column; }
.canvas { flex: 1; min-height: 0; display: flex; }
.sheet { flex: 1; min-width: 0; background: #000; border-left: 1px solid #707880; overflow: hidden; }
.draw { width: 100%; height: 100%; }
.edge { width: 20px; border-left: 1px solid #fff; border-right: 1px solid #828790; }
.lab { font: 14px "Liberation Sans", Arial, sans-serif; text-anchor: middle; }
.lab .big { font-size: 15px; }
.pin { font: 8px "Liberation Sans", Arial, sans-serif; text-anchor: middle; }
.doctabs { display: flex; height: 24px; flex: none; align-items: flex-start; border-top: 1px solid #a0a0a0; }
.doc { height: 21px; justify-content: flex-start; padding: 0 6px 0 5px; border: 1px solid #9a9a9a; border-top: 0; border-radius: 0 0 4px 4px; background: linear-gradient(#d2d2d2, #f8f8f8); }
.doc:first-child { width: 271px; }
.doc + .doc { width: 260px; }
.doc span { margin-left: 32px; flex: 1; text-align: left; }
.doc + .doc span { margin-left: 25px; }
.doc b { display: flex; align-items: center; justify-content: center; width: 14px; height: 14px; border: 1px solid #8c8c8c; border-radius: 2px; background: #b8b8b8; color: #fff; }

.cat { flex: none; display: flex; flex-direction: column; }
.dotline { height: 5px; margin-left: 455px; width: 460px; background: repeating-linear-gradient(90deg, #c4c4c4 0 3px, #fff 3px 5px) 0 1px / 100% 3px no-repeat; }
h2 { margin: 0; padding-top: 1px; width: 680px; font: bold 12px/18px "Noto Sans", sans-serif; text-align: center; height: 23px; }
.lists { display: grid; grid-template-columns: 220px 221px 221px 1fr; gap: 6px; padding: 0 4px; }
.list { display: flex; height: 93px; background: #fff; border: 1px solid #828790; overflow: hidden; }
.list .head { display: flex; justify-content: space-between; padding-right: 11px; border-right: 1px solid #e3e3e3; }
.sort { border: 5px solid transparent; border-bottom-color: #a0a0a0; border-top: 0; height: 5px; margin-top: 7px; }
.alt { background: #e8e8e8; }
.status { height: 28px; line-height: 32px; padding-right: 4px; text-align: right; }

.taskbar { display: flex; flex: none; height: 32px; background: #101010; }
.taskbar button { width: 41px; height: 32px; }
.run { background: linear-gradient(#76c69c, #76c69c) center bottom / 32px 2px no-repeat; }
.here { background: linear-gradient(#76c69c, #76c69c) center bottom / 100% 2px no-repeat, #333; }
.taskbar .note { width: 62px; margin-right: 4px; border-right: 1px solid #555; background: #1a1a1a; }

.dialog { position: absolute; left: 651px; right: 43px; top: 395px; bottom: 0; display: flex; flex-direction: column; background: #f0f0f0; box-shadow: 0 4px 16px rgba(0, 0, 0, .55); }
.dtitle { display: flex; align-items: center; height: 32px; flex: none; background: #fff; padding: 0 12px 0 8px; }
.dtitle .logo { margin-right: 5px; }
.dtitle span { line-height: 20px; padding-top: 1px; }
.dbody { flex: 1; min-height: 0; display: flex; flex-direction: column; padding: 24px 24px 0 22px; text-align: center; }
h1 { margin: 0; font: bold 19px/24px "Noto Sans", sans-serif; }
p { margin: 0 0 7px; font-size: 13px; line-height: 16px; }
.dtabs { display: flex; align-items: flex-end; padding-left: 2px; }
.dtabs button { height: 20px; width: 74px; border: 1px solid #d9d9d9; border-bottom: 0; border-left: 0; white-space: nowrap; }
.dtabs button:first-child { width: 80px; border-left: 1px solid #d9d9d9; }
.dtabs button:nth-child(3) { width: 83px; }
.dtabs .cur { height: 23px; width: 104px; background: #fff; margin-bottom: -1px; }
.dtabs button.cur { width: 104px; height: 23px; }
.dpane { flex: 1; background: #fff; border: 1px solid #d9d9d9; border-bottom: 0; }
table { border-collapse: separate; border-spacing: 0; }
th { padding: 0 4px; font-weight: normal; vertical-align: bottom; line-height: 14px; }
tbody th { vertical-align: middle; text-align: right; }
.corner { display: flex; width: 72px; height: 61px; padding: 31px 0 0 31px; align-items: flex-start; }
.corner svg { margin-right: -13px; }
.corner span { line-height: 12px; }
td { width: 60px; height: 60px; padding: 0; border-right: 1px solid #000; border-bottom: 1px solid #000; box-shadow: 4px 4px #33303c; }
th + td { width: 61px; border-left: 1px solid #000; }
tbody tr:first-child td { height: 61px; border-top: 1px solid #000; }
.zero { background: #f00; }
.one { background: #008000; }
</style>
